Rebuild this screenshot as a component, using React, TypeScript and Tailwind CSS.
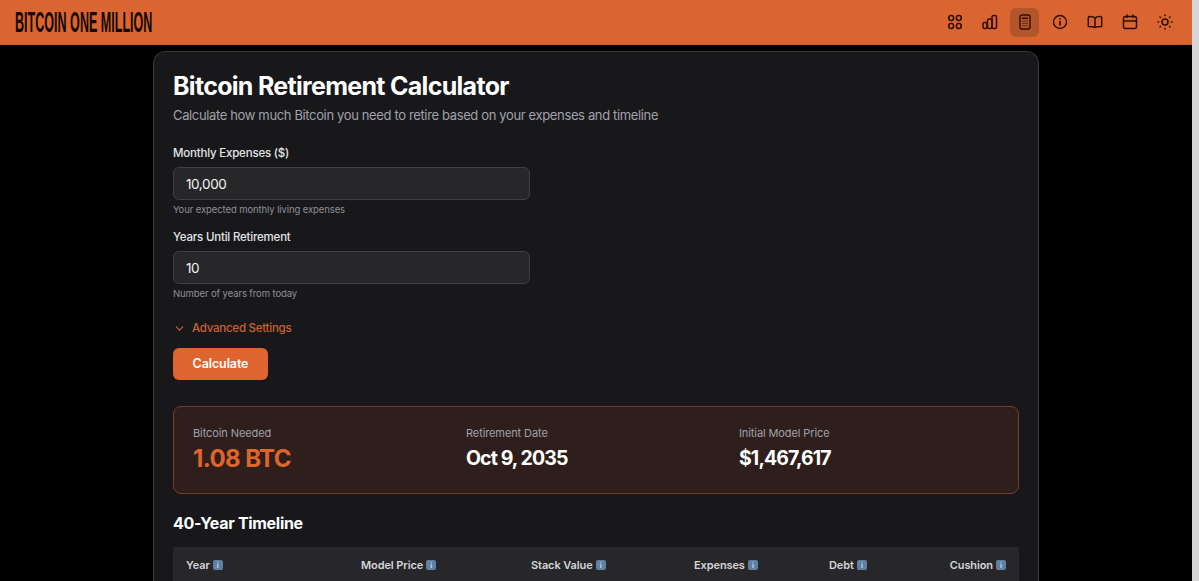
import { ChevronDown } from "lucide-react";

const ink = "#2e0e04";

function GridIcon() {
  return (
    <svg width="16" height="16" viewBox="0 0 16 16" fill="none" stroke={ink} strokeWidth="1.6">
      <rect x="1.8" y="1.5" width="4.8" height="5" rx="2.2" />
      <rect x="9.4" y="1.5" width="4.8" height="5" rx="2.2" />
      <rect x="1.8" y="9.5" width="4.8" height="5" rx="2.2" />
      <rect x="9.4" y="9.5" width="4.8" height="5" rx="2.2" />
    </svg>
  );
}

function ChartIcon() {
  return (
    <svg width="16" height="16" viewBox="0 0 16 16" fill="none" stroke={ink} strokeWidth="1.5" strokeLinejoin="round">
      <rect x="1" y="8.5" width="4" height="6" rx="1.4" />
      <rect x="5.5" y="5" width="4.5" height="9.5" rx="1.4" />
      <rect x="10" y="1.5" width="4.5" height="13" rx="1.6" />
    </svg>
  );
}

function CalcIcon() {
  return (
    <svg width="16" height="16" viewBox="0 0 16 16" fill="none" stroke={ink} strokeWidth="1.4" strokeLinecap="round">
      <rect x="3" y="1" width="10" height="14" rx="2" />
      <path d="M5.5 4.2h5" />
      <path d="M5.5 7h5M5.5 9.4h5M5.5 11.8h5" strokeWidth="1" strokeDasharray="1 1" strokeLinecap="butt" />
    </svg>
  );
}

function InfoIcon() {
  return (
    <svg width="16" height="16" viewBox="0 0 16 16" fill="none" stroke={ink} strokeWidth="1.4" strokeLinecap="round">
      <circle cx="8" cy="8" r="6.5" />
      <path d="M8 7.6v3.4M8 4.9h.01" strokeWidth="1.7" />
    </svg>
  );
}

function BookIcon() {
  return (
    <svg width="16" height="16" viewBox="0 0 16 16" fill="none" stroke={ink} strokeWidth="1.5" strokeLinejoin="round">
      <path d="M8 4.4C7 3 5.4 2.6 2.8 2.6c-.9 0-1.5.5-1.5 1.4v8.4c2.8 0 5.2 0 6.7 1.2 1.5-1.2 3.9-1.2 6.7-1.2V4c0-.9-.6-1.4-1.5-1.4-2.6 0-4.2.4-5.2 1.8zM8 4.4v9.2" />
    </svg>
  );
}

function CalendarIcon() {
  return (
    <svg width="16" height="16" viewBox="0 0 16 16" fill="none" stroke={ink} strokeWidth="1.5" strokeLinecap="round">
      <rect x="1.5" y="2.5" width="13" height="12" rx="2" />
      <path d="M1.5 7h13M5 1v2.6M11 1v2.6" />
    </svg>
  );
}

function SunIcon() {
  return (
    <svg width="16" height="16" viewBox="0 0 16 16" fill="none" stroke={ink} strokeWidth="1.5" strokeLinecap="round">
      <circle cx="8" cy="8" r="3" />
      <path d="M8 1v.6M8 14.4v.6M1 8h.6M14.4 8h.6M3 3l.5.5M12.5 12.5l.5.5M3 13l.5-.5M12.5 3.5l.5-.5" />
    </svg>
  );
}

function NavButton({ active, children }: { active?: boolean; children: React.ReactNode }) {
  return (
    <button className={`flex h-[29px] w-[29px] items-center justify-center rounded-md ${active ? "bg-[#b3552a]" : ""}`}>
      {children}
    </button>
  );
}

function Field({ label, value, hint }: { label: string; value: string; hint: string }) {
  return (
    <div>
      <label className="block text-[11.5px] leading-[17px] font-medium tracking-[-0.2px] text-[#e4e4e7]">{label}</label>
      <input
        readOnly
        value={value}
        className="mt-[5px] block h-[33px] w-[357px] rounded-md border border-[#3f3f46] bg-[#27272a] px-[12px] text-[13.5px] tracking-[-0.4px] text-[#f4f4f5] outline-none"
      />
      <p className="mt-[3px] text-[9.5px] leading-[14px] tracking-[-0.1px] text-[#8f8f96]">{hint}</p>
    </div>
  );
}

function Stat({ label, value, accent }: { label: string; value: string; accent?: boolean }) {
  return (
    <div>
      <div className="text-[11px] leading-[16px] tracking-[-0.1px] text-[#a1a1aa]">{label}</div>
      <div className={`mt-[2px] font-bold ${accent ? "text-[24px] leading-[32px] tracking-[-0.6px] text-[#e0652d]" : "text-[19.5px] leading-[30px] tracking-[-0.9px] text-white"}`}>
        {value}
      </div>
    </div>
  );
}

function Th({ label, className }: { label: string; className?: string }) {
  return (
    <div className={`flex items-center gap-[3px] text-[11px] font-semibold tracking-[-0.1px] text-[#d4d4d8] ${className ?? ""}`}>
      <span>{label}</span>
      <span className="flex h-[10px] w-[10px] items-center justify-center rounded-[2px] bg-[#5f7fa3] text-[7px] leading-none font-bold text-[#cfdcea]">
        i
      </span>
    </div>
  );
}

export default function App() {
  return (
    <div className="flex h-[581px] overflow-hidden bg-[#d6d6d6] font-['Inter',sans-serif]">
      <div className="w-[1192px] shrink-0 bg-black">
        <header className="flex h-[45px] items-center justify-between border-b border-[#c9592a] bg-[#da6530] pr-[13px] pl-[15px]">
          <div className="w-[138px]">
            <div className="origin-left scale-x-[0.433] text-[29px] leading-none font-bold whitespace-nowrap text-[#120703] font-['Liberation_Sans',sans-serif]">
              BITCOIN ONE MILLION
            </div>
          </div>
          <nav className="flex items-center gap-[6px]">
            <NavButton><GridIcon /></NavButton>
            <NavButton><ChartIcon /></NavButton>
            <NavButton active><CalcIcon /></NavButton>
            <NavButton><InfoIcon /></NavButton>
            <NavButton><BookIcon /></NavButton>
            <NavButton><CalendarIcon /></NavButton>
            <NavButton><SunIcon /></NavButton>
          </nav>
        </header>

        <main className="mx-auto mt-[6px] h-[600px] w-[886px] rounded-xl border border-[#3a3a3f] bg-[#18181b] px-[19px] pt-[18px]">
          <h1 className="text-[25px] leading-[32px] font-bold tracking-[-0.7px] text-white">Bitcoin Retirement Calculator</h1>
          <p className="mt-[3px] text-[13px] leading-[20px] tracking-[-0.36px] text-[#a1a1aa]">
            Calculate how much Bitcoin you need to retire based on your expenses and timeline
          </p>

          <div className="mt-[20px] flex flex-col gap-[12px]">
            <Field label="Monthly Expenses ($)" value="10,000" hint="Your expected monthly living expenses" />
            <Field label="Years Until Retirement" value="10" hint="Number of years from today" />
          </div>

          <button className="mt-[19px] flex items-center gap-[6px] text-[11.5px] leading-[16px] font-medium tracking-[-0.25px] text-[#cb622f]">
            <ChevronDown size={13} />
            Advanced Settings
          </button>

          <button className="mt-[12px] block h-[32px] w-[95px] rounded-md bg-[#df652e] pt-[1px] text-[12.5px] font-semibold tracking-[-0.1px] text-white">
            Calculate
          </button>

          <section className="mt-[26px] flex h-[88px] items-center rounded-lg border border-[#763a29] bg-[#2e1e1c] px-[19px]">
            <div className="grid w-full grid-cols-3 gap-[13px]">
              <Stat label="Bitcoin Needed" value="1.08 BTC" accent />
              <Stat label="Retirement Date" value="Oct 9, 2035" />
              <Stat label="Initial Model Price" value="$1,467,617" />
            </div>
          </section>

          <h2 className="mt-[18px] text-[16px] leading-[22px] font-bold tracking-[-0.3px] text-white">40-Year Timeline</h2>

          <div className="mt-[13px] flex h-[36px] items-center justify-between bg-[#27272a] px-[13px]">
            <Th label="Year" className="w-[175px]" />
            <Th label="Model Price" className="w-[170px]" />
            <Th label="Stack Value" className="w-[163px]" />
            <Th label="Expenses" className="w-[135px]" />
            <Th label="Debt" className="w-[80px]" />
            <Th label="Cushion" className="ml-auto" />
          </div>
        </main>
      </div>
    </div>
  );
}
